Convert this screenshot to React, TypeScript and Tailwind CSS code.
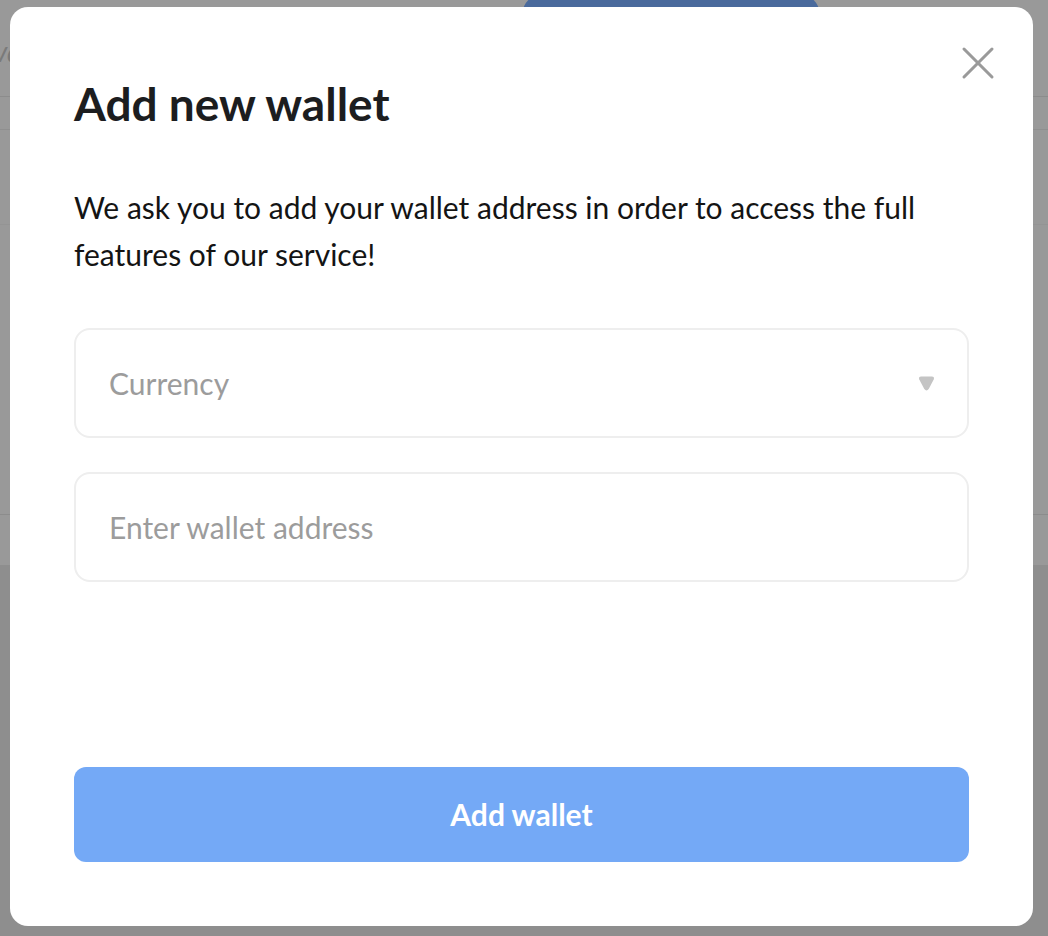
import { X } from "lucide-react";

export default function App() {
  return (
    <div
      className="relative w-[1048px] h-[936px] overflow-hidden bg-[#8e8e8e]"
      style={{ fontFamily: "Lato, 'Open Sans', sans-serif" }}
    >
      {/* page behind the overlay */}
      <div className="flex flex-col h-[565px] bg-[#999999]">
        <div className="flex h-[97px] border-b border-[#8c8c8c]">
          <div className="pt-[30px] text-[28px] italic text-[#7a7a7a] -ml-[6px]">va</div>
          <div className="ml-[502px] mt-[-4px] w-[296px] h-[40px] rounded-[16px] bg-[#4a6a9c]" />
        </div>
        <div className="h-[33px] border-b border-[#8f8f8f]" />
        <div className="h-[95px] border-b border-[#949494]" />
        <div className="h-[290px] border-b border-[#8c8c8c]" />
      </div>

      {/* modal */}
      <div className="absolute left-[10px] top-[7px] w-[1023px] h-[919px] rounded-[18px] bg-white flex flex-col px-[64px]">
        <button className="absolute right-[27px] top-[28px] text-[#9a9a9a]">
          <X size={56} strokeWidth={1.3} />
        </button>

        <h1 className="mt-[71px] text-[46px] leading-[52px] font-bold text-[#1c1d1f]">
          Add new wallet
        </h1>

        <p className="mt-[54px] text-[30px] leading-[47px] text-[#141414] w-[880px]">
          We ask you to add your wallet address in order to access the full features of our service!
        </p>

        <div className="mt-[50px] h-[110px] rounded-[16px] border-2 border-[#eeeeee] flex items-center justify-between pl-[33px] pr-[32px]">
          <span className="text-[30px] text-[#9c9c9c]">Currency</span>
          <svg width="17" height="17" viewBox="0 0 16 16">
            <path
              d="M3 1.5 H13 Q15.8 1.5 14.8 4.3 L10.2 13 Q8 16 5.8 13 L1.2 4.3 Q0.2 1.5 3 1.5 Z"
              fill="#c4c4c4"
            />
          </svg>
        </div>

        <div className="mt-[34px] h-[110px] rounded-[16px] border-2 border-[#eeeeee] flex items-center pl-[33px]">
          <span className="text-[30px] text-[#9c9c9c]">Enter wallet address</span>
        </div>

        <button className="mt-auto mb-[64px] h-[95px] rounded-[12px] bg-[#74a9f6] text-white text-[30px] font-bold">
          Add wallet
        </button>
      </div>
    </div>
  );
}
